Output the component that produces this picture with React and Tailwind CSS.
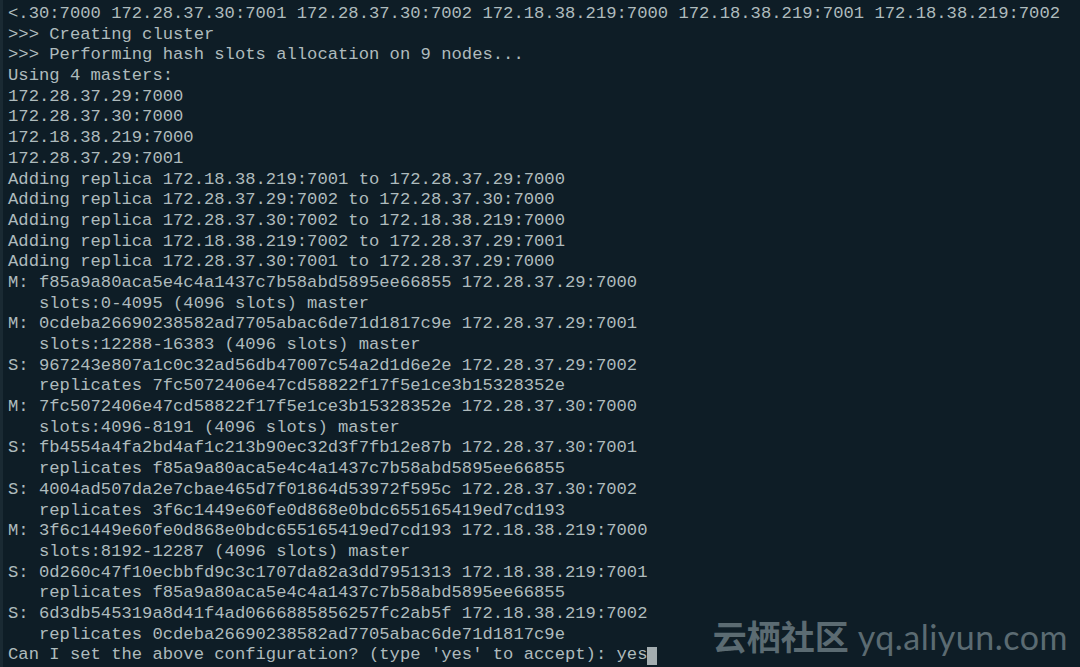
const lines = [
  "<.30:7000 172.28.37.30:7001 172.28.37.30:7002 172.18.38.219:7000 172.18.38.219:7001 172.18.38.219:7002",
  ">>> Creating cluster",
  ">>> Performing hash slots allocation on 9 nodes...",
  "Using 4 masters:",
  "172.28.37.29:7000",
  "172.28.37.30:7000",
  "172.18.38.219:7000",
  "172.28.37.29:7001",
  "Adding replica 172.18.38.219:7001 to 172.28.37.29:7000",
  "Adding replica 172.28.37.29:7002 to 172.28.37.30:7000",
  "Adding replica 172.28.37.30:7002 to 172.18.38.219:7000",
  "Adding replica 172.18.38.219:7002 to 172.28.37.29:7001",
  "Adding replica 172.28.37.30:7001 to 172.28.37.29:7000",
  "M: f85a9a80aca5e4c4a1437c7b58abd5895ee66855 172.28.37.29:7000",
  "   slots:0-4095 (4096 slots) master",
  "M: 0cdeba26690238582ad7705abac6de71d1817c9e 172.28.37.29:7001",
  "   slots:12288-16383 (4096 slots) master",
  "S: 967243e807a1c0c32ad56db47007c54a2d1d6e2e 172.28.37.29:7002",
  "   replicates 7fc5072406e47cd58822f17f5e1ce3b15328352e",
  "M: 7fc5072406e47cd58822f17f5e1ce3b15328352e 172.28.37.30:7000",
  "   slots:4096-8191 (4096 slots) master",
  "S: fb4554a4fa2bd4af1c213b90ec32d3f7fb12e87b 172.28.37.30:7001",
  "   replicates f85a9a80aca5e4c4a1437c7b58abd5895ee66855",
  "S: 4004ad507da2e7cbae465d7f01864d53972f595c 172.28.37.30:7002",
  "   replicates 3f6c1449e60fe0d868e0bdc655165419ed7cd193",
  "M: 3f6c1449e60fe0d868e0bdc655165419ed7cd193 172.18.38.219:7000",
  "   slots:8192-12287 (4096 slots) master",
  "S: 0d260c47f10ecbbfd9c3c1707da82a3dd7951313 172.18.38.219:7001",
  "   replicates f85a9a80aca5e4c4a1437c7b58abd5895ee66855",
  "S: 6d3db545319a8d41f4ad0666885856257fc2ab5f 172.18.38.219:7002",
  "   replicates 0cdeba26690238582ad7705abac6de71d1817c9e",
];

export default function App() {
  return (
    <div className="relative w-[1080px] h-[667px] overflow-hidden bg-[#0e1d26] border-l-[3px] border-[#1a2a33]">
      <div className="pl-[5px] pt-[4px] font-['Liberation_Mono',monospace] text-[17.2px] leading-[20.68px] text-[#aebbbd] whitespace-pre">
        {lines.map((l, i) => (
          <div key={i}>{l}</div>
        ))}
        <div className="flex items-center">
          <span>Can I set the above configuration? (type 'yes' to accept): yes</span>
          <span className="inline-block w-[10px] h-[18px] bg-[#a3adb0]" />
        </div>
      </div>
      <div className="absolute right-[12px] bottom-[13px] flex items-baseline gap-[9px] text-[#5b6b72]">
        <span className="font-['Noto_Sans_CJK_SC',sans-serif] font-bold text-[34px] leading-none">云栖社区</span>
        <span className="font-['Lato',sans-serif] text-[34px] tracking-[0.5px] leading-none">yq.aliyun.com</span>
      </div>
    </div>
  );
}
